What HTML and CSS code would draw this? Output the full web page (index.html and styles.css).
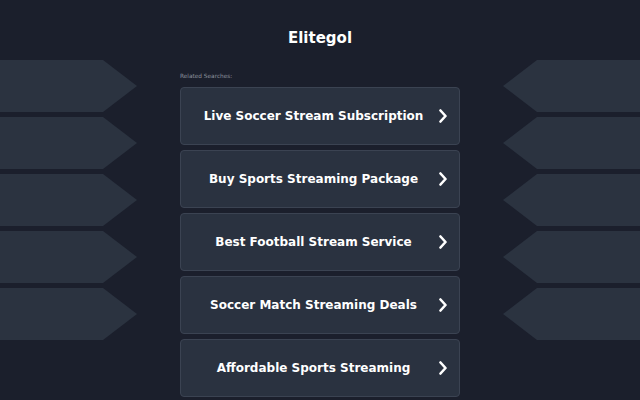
FILE: index.html
```html
<!DOCTYPE html>
<html>
<head>
<meta charset="utf-8">
<link rel="stylesheet" href="styles.css">
</head>
<body>
<header class="header"><h1 class="title">Elitegol</h1></header>
<div class="row">
  <div class="deco deco-left">
    <div class="arrow"></div><div class="arrow"></div><div class="arrow"></div><div class="arrow"></div><div class="arrow"></div>
  </div>
  <main class="main">
    <div class="label">Related Searches:</div>
    <a class="card" href="#"><span class="card-text">Live Soccer Stream Subscription</span><span class="chev"><svg width="10" height="14" viewBox="0 0 10 14"><path d="M2.5 1.5 L7.5 7 L2.5 12.5" fill="none" stroke="#fff" stroke-width="2.6" stroke-linecap="round" stroke-linejoin="round"/></svg></span></a>
    <a class="card" href="#"><span class="card-text">Buy Sports Streaming Package</span><span class="chev"><svg width="10" height="14" viewBox="0 0 10 14"><path d="M2.5 1.5 L7.5 7 L2.5 12.5" fill="none" stroke="#fff" stroke-width="2.6" stroke-linecap="round" stroke-linejoin="round"/></svg></span></a>
    <a class="card" href="#"><span class="card-text">Best Football Stream Service</span><span class="chev"><svg width="10" height="14" viewBox="0 0 10 14"><path d="M2.5 1.5 L7.5 7 L2.5 12.5" fill="none" stroke="#fff" stroke-width="2.6" stroke-linecap="round" stroke-linejoin="round"/></svg></span></a>
    <a class="card" href="#"><span class="card-text">Soccer Match Streaming Deals</span><span class="chev"><svg width="10" height="14" viewBox="0 0 10 14"><path d="M2.5 1.5 L7.5 7 L2.5 12.5" fill="none" stroke="#fff" stroke-width="2.6" stroke-linecap="round" stroke-linejoin="round"/></svg></span></a>
    <a class="card" href="#"><span class="card-text">Affordable Sports Streaming</span><span class="chev"><svg width="10" height="14" viewBox="0 0 10 14"><path d="M2.5 1.5 L7.5 7 L2.5 12.5" fill="none" stroke="#fff" stroke-width="2.6" stroke-linecap="round" stroke-linejoin="round"/></svg></span></a>
  </main>
  <div class="deco deco-right">
    <div class="arrow"></div><div class="arrow"></div><div class="arrow"></div><div class="arrow"></div><div class="arrow"></div>
  </div>
</div>
</body>
</html>
```
FILE: styles.css
```css
html, body {
  margin: 0;
  padding: 0;
  background: #1b1f2c;
  height: 100%;
  overflow: hidden;
  font-family: "DejaVu Sans", "Liberation Sans", sans-serif;
}
.header {
  height: 60px;
  display: flex;
  justify-content: center;
}
.title {
  margin: 0;
  padding-top: 29px;
  font-size: 15px;
  line-height: 19px;
  font-weight: bold;
  color: #ffffff;
}
.row {
  display: flex;
  justify-content: space-between;
  align-items: flex-start;
}
.deco {
  width: 137px;
  display: flex;
  flex-direction: column;
  gap: 5px;
}
.arrow {
  height: 52px;
  background: #2b3340;
}
.deco-left .arrow {
  clip-path: polygon(0 0, 103px 0, 137px 50%, 103px 100%, 0 100%);
}
.deco-right .arrow {
  clip-path: polygon(34px 0, 100% 0, 100% 100%, 34px 100%, 0 50%);
}
.main {
  width: 280px;
  display: flex;
  flex-direction: column;
  gap: 5px;
}
.label {
  font-size: 5.8px;
  line-height: 8px;
  color: #8b909b;
  margin-top: 12px;
  margin-bottom: 2px;
}
.card {
  box-sizing: border-box;
  height: 58px;
  display: flex;
  align-items: center;
  padding: 0 11px 0 20px;
  background: #2a3240;
  border: 1px solid #3b4352;
  border-radius: 4px;
  text-decoration: none;
}
.card-text {
  flex: 1;
  text-align: center;
  color: #ffffff;
  font-weight: bold;
  font-size: 12px;
  white-space: nowrap;
}
.chev {
  width: 22px;
  display: flex;
  justify-content: flex-end;
}
.chev svg { display: block; }
```
